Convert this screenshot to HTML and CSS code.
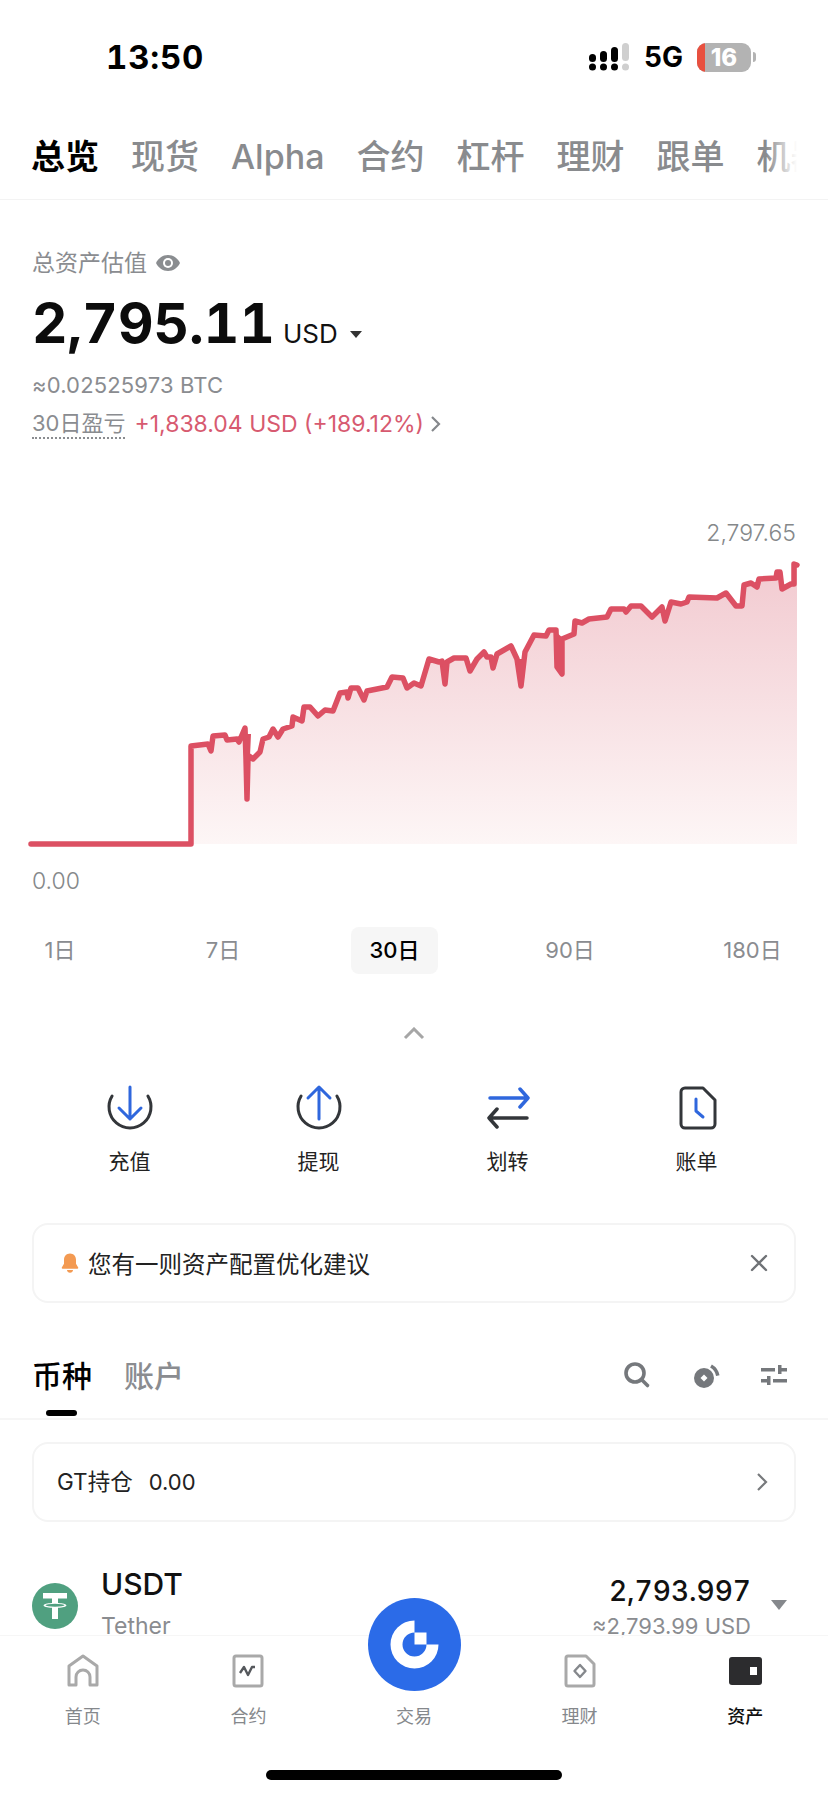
FILE: index.html
```html
<!DOCTYPE html>
<html lang="zh">
<head>
<meta charset="utf-8">
<title>资产总览</title>
<link rel="stylesheet" href="styles.css">
</head>
<body>
<div class="page">
  <header class="status">
    <span class="time">13:50</span>
    <div class="status-right">
      <svg class="signal" width="44" height="30" viewBox="0 0 44 30">
        <g fill="#000"><rect x="2" y="12" width="7" height="8" rx="3.5"/><rect x="13" y="9" width="7" height="11" rx="3.5"/><rect x="24" y="5" width="7" height="15" rx="3.5"/><circle cx="5.5" cy="25" r="3.5"/><circle cx="16.5" cy="25" r="3.5"/><circle cx="27.5" cy="25" r="3.5"/></g>
        <g fill="#cfcfcf"><rect x="35" y="1" width="7" height="18" rx="3.5"/><circle cx="38.5" cy="25" r="3.5"/></g>
      </svg>
      <span class="net">5G</span>
      <div class="battery"><span class="battery-low"></span><span class="battery-num">16</span></div>
      <span class="battery-nub"></span>
    </div>
  </header>

  <nav class="tabs">
    <span class="tab tab-on">总览</span><span class="tab">现货</span><span class="tab">Alpha</span><span class="tab">合约</span><span class="tab">杠杆</span><span class="tab">理财</span><span class="tab">跟单</span><span class="tab">机器人</span>
  </nav>

  <section class="summary">
    <div class="sum-label">总资产估值
      <svg class="eye" width="26" height="18" viewBox="0 0 26 18"><path fill="#8a8d90" d="M13 1C7.500 1 3.300 4.500 1 9c2.300 4.500 6.500 8 12 8s9.700-3.500 12-8c-2.300-4.500-6.500-8-12-8Z"/><circle cx="13" cy="9" r="5" fill="#fff"/><circle cx="13" cy="9" r="3" fill="#8a8d90"/></svg>
    </div>
    <div class="balance"><span class="bal-num">2,795.11</span><span class="bal-unit">USD</span><span class="tri"></span></div>
    <div class="btc">≈0.02525973 BTC</div>
    <div class="pnl"><span class="pnl-label">30日盈亏</span><span class="pnl-val">+1,838.04 USD (+189.12%)</span>
      <svg width="11" height="18" viewBox="0 0 11 18"><path d="M2 2l7 7-7 7" fill="none" stroke="#85888c" stroke-width="2.200"/></svg>
    </div>
  </section>

  <section class="chart">
    <div class="chart-max">2,797.65</div>
    <svg class="chart-svg" width="828" height="310" viewBox="0 550 828 310">
      <defs><linearGradient id="area" x1="0" y1="0" x2="0" y2="1"><stop offset="0" stop-color="#f2cad0"/><stop offset="1" stop-color="#fdf6f6"/></linearGradient></defs>
      <path fill="url(#area)" d="M191 845V747L208 745 211 752 213 737 225 736 227 741 237 740 239 743 245 729 247 800 249 757 253 760 260 753 263 740 269 738 273 730 278 738 283 730 292 727 293 718 302 722 304 708 310 708 318 717 325 711 333 712 340 694 347 693 348 699 351 689 358 689 364 701 367 692 387 688 392 678 403 679 407 689 414 684 421 687 429 660 439 663 442 662 445 685 447 663 454 659 466 659 470 672 477 660 484 653 487 658 491 658 493 669 497 655 511 647 517 660 521 687 525 653 534 636 546 637 549 631 556 631 557 668 562 675 562 640 574 635 575 622 582 624 589 620 607 618 611 610 624 610 626 613 631 607 641 607 652 618 662 608 665 622 671 603 681 605 687 603 689 598 717 599 726 594 736 607 742 607 744 586 751 584 757 588 759 580 776 579 777 573 780 573 782 590 791 585 794 585 794 565 797 566V845Z"/>
      <path fill="none" stroke="#dc5063" stroke-width="5.500" stroke-linecap="round" stroke-linejoin="round" d="M31 845H191V747L208 745 211 752 213 737 225 736 227 741 237 740 239 743 245 729 246 760 247 800 248 760 249 757 253 760 260 753 263 740 269 738 273 730 278 738 283 730 292 727 293 718 302 722 304 708 310 708 318 717 325 711 333 712 340 694 347 693 348 699 351 689 358 689 364 701 367 692 387 688 392 678 403 679 407 689 414 684 421 687 429 660 439 663 442 662 445 685 447 663 454 659 466 659 470 672 477 660 484 653 487 658 491 658 493 669 497 655 511 647 517 660 521 687 525 653 534 636 546 637 549 631 556 631 557 668 562 675 562 640 574 635 575 622 582 624 589 620 607 618 611 610 624 610 626 613 631 607 641 607 652 618 662 608 665 622 671 603 681 605 687 603 689 598 717 599 726 594 736 607 742 607 744 586 751 584 757 588 759 580 776 579 777 573 780 573 782 590 791 585 794 585 794 565 797 566"/>
      <path fill="#dc5063" d="M243 735L251 735 249 780 247 803 245 780ZM518 660L526 660 524 680 521 689 519 680ZM555 632L564 640 564 675 561 677 555 668ZM442 665L448 665 447 680 445 688 443 680Z"/>
    </svg>
    <div class="chart-min">0.00</div>
  </section>

  <div class="periods">
    <span class="period">1日</span><span class="period">7日</span><span class="period period-on">30日</span><span class="period">90日</span><span class="period">180日</span>
  </div>

  <div class="collapse">
    <svg width="22" height="13" viewBox="0 0 22 13"><path d="M2 11l9-9 9 9" fill="none" stroke="#a6a6a6" stroke-width="3"/></svg>
  </div>

  <div class="actions">
    <div class="action">
      <svg width="48" height="48" viewBox="0 0 48 48" fill="none" stroke-width="3" stroke-linecap="round" stroke-linejoin="round"><path stroke="#33363a" d="M6.100 13A21 21 0 1 0 41.900 13"/><path stroke="#2f67dd" d="M24 4V36M13 25L24 36 35 25"/></svg>
      <span>充值</span>
    </div>
    <div class="action">
      <svg width="48" height="48" viewBox="0 0 48 48" fill="none" stroke-width="3" stroke-linecap="round" stroke-linejoin="round"><path stroke="#33363a" d="M6.100 13A21 21 0 1 0 41.900 13"/><path stroke="#2f67dd" d="M24 36V4M13 15L24 4 35 15"/></svg>
      <span>提现</span>
    </div>
    <div class="action">
      <svg width="48" height="48" viewBox="0 0 48 48" fill="none" stroke-width="3.500" stroke-linecap="round" stroke-linejoin="round"><path stroke="#2f67dd" d="M6 15H44M36 6L44 15 36 24"/><path stroke="#33363a" d="M43 35H5M13 26L5 35 13 44"/></svg>
      <span>划转</span>
    </div>
    <div class="action">
      <svg width="48" height="48" viewBox="0 0 48 48" fill="none" stroke-width="3" stroke-linecap="round" stroke-linejoin="round"><path stroke="#33363a" d="M12 5H30L42 17V41a4 4 0 0 1-4 4H12a4 4 0 0 1-4-4V9a4 4 0 0 1 4-4Z"/><path stroke="#2f67dd" d="M23 16V28L30 34"/></svg>
      <span>账单</span>
    </div>
  </div>

  <div class="card notice">
    <svg width="18" height="20" viewBox="0 0 18 20"><path fill="#f39a52" d="M9 0.500c-3.600 0-6 2.800-6 6.300v3.900L0.800 14.600c-.3.600.1 1.200.7 1.200h15c.6 0 1-.6.7-1.200L15 10.700V6.800C15 3.300 12.600.5 9 .5Z"/><path fill="#f39a52" d="M6 17h6c0 1.600-1.300 2.700-3 2.700S6 18.600 6 17Z"/></svg>
    <span class="notice-text">您有一则资产配置优化建议</span>
    <svg class="close" width="18" height="18" viewBox="0 0 18 18"><path d="M2 2l14 14M16 2L2 16" stroke="#6f7276" stroke-width="2.400" stroke-linecap="round"/></svg>
  </div>

  <div class="list-head">
    <div class="list-tab list-tab-on">币种</div>
    <div class="list-tab">账户</div>
    <div class="tools">
      <svg width="28" height="28" viewBox="0 0 28 28" fill="none" stroke="#75787c" stroke-width="3.600"><circle cx="11" cy="11" r="9"/><path d="M17.500 17.500l6 6" stroke-linecap="round"/></svg>
      <svg width="28" height="28" viewBox="0 0 28 28"><circle cx="12" cy="16" r="10" fill="#75787c"/><path fill="#fff" d="M12 12.500l3.500 3.500-3.500 3.500L8.500 16Z"/><path d="M19 3.900A14 14 0 0 1 25.800 13.600" fill="none" stroke="#75787c" stroke-width="3.500"/></svg>
      <svg width="28" height="28" viewBox="0 0 28 28" fill="#75787c"><rect x="1" y="6" width="14" height="3.500"/><rect x="18" y="3" width="3.500" height="9"/><rect x="21" y="6" width="6" height="3.500"/><rect x="1" y="17" width="6" height="3.500"/><rect x="7" y="14" width="3.500" height="9"/><rect x="13" y="17" width="14" height="3.500"/></svg>
    </div>
  </div>

  <div class="card gt">
    <span class="gt-label">GT持仓</span><span class="gt-val">0.00</span>
    <svg class="gt-arrow" width="12" height="20" viewBox="0 0 12 20"><path d="M2 2l8 8-8 8" fill="none" stroke="#77797c" stroke-width="2.200"/></svg>
  </div>

  <div class="coin">
    <svg class="coin-icon" width="46" height="46" viewBox="0 0 46 46"><circle cx="23" cy="23" r="23" fill="#50a080"/><path fill="#fff" d="M11 10H35V15.500H26V20c4.800.3 8.400 1.200 8.400 2.400S30.800 24.500 26 24.800V36H20V24.800c-4.800-.3-8.400-1.200-8.400-2.400S15.200 20.300 20 20V15.500H11Z"/><ellipse cx="23" cy="22.300" rx="9.500" ry="1.500" fill="#50a080"/></svg>
    <div class="coin-name"><div class="coin-sym">USDT</div><div class="coin-full">Tether</div></div>
    <div class="coin-amt"><div class="coin-qty">2,793.997</div><div class="coin-usd">≈2,793.99 USD</div></div>
    <span class="coin-tri"></span>
  </div>

  <footer class="bottom">
    <div class="trade-btn">
      <svg width="93" height="93" viewBox="0 0 93 93"><circle cx="46.500" cy="46.500" r="46.500" fill="#2b6be8"/><path fill="#fff" d="M46.500 22.500A24 24 0 1 0 70.500 46.500H58.500A12 12 0 1 1 46.500 34.500V46.500H58.500V34.500H46.500Z"/></svg>
    </div>
    <div class="nav-item">
      <svg width="34" height="34" viewBox="0 0 34 34" fill="none" stroke="#a9a9a9" stroke-width="3" stroke-linejoin="round"><path d="M3 31V12L17 2 31 12V31H24V23a7 7 0 0 0-14 0V31Z"/></svg>
      <span>首页</span>
    </div>
    <div class="nav-item">
      <svg width="34" height="34" viewBox="0 0 34 34" fill="none" stroke="#a9a9a9" stroke-width="3" stroke-linejoin="round"><path d="M5 2H29a2 2 0 0 1 2 2V30a2 2 0 0 1-2 2H5a2 2 0 0 1-2-2V4a2 2 0 0 1 2-2Z"/><path stroke="#55585c" stroke-width="2.400" d="M9 19l4-6 4 8 4-8h3"/></svg>
      <span>合约</span>
    </div>
    <div class="nav-item nav-gap"><span>交易</span></div>
    <div class="nav-item">
      <svg width="34" height="34" viewBox="0 0 34 34" fill="none" stroke="#a9a9a9" stroke-width="3" stroke-linejoin="round"><path d="M5 2H23L31 10V30a2 2 0 0 1-2 2H5a2 2 0 0 1-2-2V4a2 2 0 0 1 2-2Z"/><path stroke="#85888c" stroke-width="2.400" d="M17 11l5.500 6-5.500 6-5.500-6Z"/></svg>
      <span>理财</span>
    </div>
    <div class="nav-item nav-on">
      <svg width="34" height="34" viewBox="0 0 34 34"><rect x="1" y="3" width="33" height="28" rx="3" fill="#2c2c2e"/><rect x="22" y="13" width="7" height="8" fill="#fff"/></svg>
      <span>资产</span>
    </div>
    <div class="home-bar"></div>
  </footer>
</div>
</body>
</html>
```

FILE: styles.css
```css
* { box-sizing: border-box; }
html, body { margin: 0; padding: 0; background: #fff; }
body { font-family: Inter, "Noto Sans CJK SC", sans-serif; color: #111; }
.page { position: relative; width: 828px; height: 1795px; overflow: hidden; background: #fff; }

.status { height: 114px; display: flex; align-items: center; justify-content: space-between; padding: 0 72px 0 106px; }
.time { font: 700 33px/40px Inter, sans-serif; color: #000; font-feature-settings: "tnum"; letter-spacing: .8px; }
.status-right { display: flex; align-items: center; }
.signal { margin-right: 13px; }
.net { font: 700 28px/30px Inter, sans-serif; color: #000; margin-right: 14px; }
.battery { position: relative; width: 54px; height: 29px; border-radius: 9px; background: #b3b3b3; overflow: hidden; display: flex; align-items: center; justify-content: center; }
.battery-low { position: absolute; left: 0; top: 0; bottom: 0; width: 8px; background: #e8503f; }
.battery-num { font: 800 24px/29px Inter, sans-serif; color: #fff; position: relative; }
.battery-nub { width: 3px; height: 10px; margin-left: 2px; background: #b3b3b3; border-radius: 0 3px 3px 0; }

.tabs { position: relative; height: 86px; padding: 0 0 0 31px; display: flex; align-items: center; gap: 32px; overflow: hidden; border-bottom: 1px solid #f3f3f3; white-space: nowrap; }
.tabs::after { content: ""; position: absolute; right: 0; top: 0; bottom: 0; width: 62px; background: linear-gradient(90deg, rgba(255,255,255,0), #fff 50%); }
.tab { font: 500 34px/44px Inter, "Noto Sans CJK SC", sans-serif; color: #898b8e; flex: none; }
.tab-on { color: #000; font-weight: 700; }

.summary { padding: 48px 0 0 32px; }
.sum-label { display: flex; align-items: center; gap: 8px; height: 30px; font: 400 23px/30px Inter, "Noto Sans CJK SC", sans-serif; color: #8a8c90; }
.balance { display: flex; align-items: baseline; height: 56px; margin-top: 17px; line-height: 56px; }
.bal-num { font: 700 55px/56px Inter, sans-serif; color: #0c0c0c; font-feature-settings: "tnum"; }
.bal-unit { font: 400 26px/56px Inter, sans-serif; margin-left: 8px; color: #111; }
.tri { width: 0; height: 0; margin-left: 12px; border-left: 6px solid transparent; border-right: 6px solid transparent; border-top: 7px solid #333; transform: translateY(-5px); }
.btc { height: 30px; margin-top: 19px; font: 400 22px/30px Inter, sans-serif; color: #8a8c90; letter-spacing: .15px; }
.pnl { display: flex; align-items: center; height: 32px; margin-top: 8px; font: 400 22px/32px Inter, "Noto Sans CJK SC", sans-serif; }
.pnl-label { color: #8a8c90; border-bottom: 2px dotted #8a8c90; line-height: 28px; margin-right: 9px; }
.pnl-val { color: #d75a70; margin-right: 6px; font-size: 23px; }

.chart { margin-top: 78px; }
.chart-max { height: 30px; padding-right: 32px; text-align: right; font: 300 23px/30px Inter, sans-serif; color: #85888a; }
.chart-svg { display: block; margin-top: 1px; }
.chart-min { height: 30px; margin-top: 7px; padding-left: 32px; font: 300 23px/30px Inter, sans-serif; color: #85888a; }

.periods { display: grid; grid-template-columns: 120px 206px 137px 214px 151px; justify-items: center; align-items: center; height: 47px; margin-top: 31px; }
.period { font: 400 22px/47px Inter, "Noto Sans CJK SC", sans-serif; color: #8a8c90; }
.period-on { width: 87px; height: 47px; border-radius: 8px; background: #f6f6f6; color: #000; text-align: center; font-weight: 500; }

.collapse { height: 14px; margin-top: 53px; display: flex; justify-content: center; }

.actions { display: grid; grid-template-columns: repeat(4, 189px); padding-left: 35px; margin-top: 42px; }
.action { display: flex; flex-direction: column; align-items: center; gap: 13px; font: 400 21px/32px "Noto Sans CJK SC", sans-serif; color: #222; }

.card { margin: 0 32px; border: 2px solid #f4f4f4; border-radius: 16px; display: flex; align-items: center; }
.notice { height: 80px; margin-top: 47px; padding: 0 26px 0 27px; }
.notice-text { margin-left: 9px; font: 400 23.5px/32px "Noto Sans CJK SC", sans-serif; color: #222; flex: 1; }

.list-head { display: flex; align-items: center; height: 117px; padding: 0 40px 0 32px; border-bottom: 2px solid #f6f6f6; gap: 32px; }
.list-tab { font: 500 30px/40px "Noto Sans CJK SC", sans-serif; color: #8a8c90; position: relative; top: 13px; }
.list-tab-on { color: #000; }
.list-tab-on::after { content: ""; position: absolute; left: 14px; bottom: -22px; width: 31px; height: 6px; border-radius: 3px; background: #000; }
.tools { margin-left: auto; display: flex; gap: 40px; position: relative; top: 15px; }

.gt { height: 80px; margin-top: 22px; padding: 0 26px 0 23px; }
.gt-label { font: 400 22.5px/30px Inter, "Noto Sans CJK SC", sans-serif; color: #222; }
.gt-val { font: 400 22px/30px Inter, sans-serif; color: #222; margin-left: 16px; }
.gt-arrow { margin-left: auto; }

.coin { display: flex; align-items: flex-start; padding: 42px 41px 0 32px; }
.coin-icon { margin-top: 19px; flex: none; }
.coin-name { margin-left: 23px; }
.coin-sym { font: 500 30px/40px Inter, sans-serif; color: #111; }
.coin-full { font: 400 23px/36px Inter, sans-serif; color: #8a8c90; margin-top: 4px; }
.coin-amt { margin-left: auto; text-align: right; }
.coin-qty { font: 500 28px/36px Inter, sans-serif; color: #111; margin-top: 9px; font-feature-settings: "tnum"; }
.coin-usd { font: 400 22px/34px Inter, sans-serif; color: #8a8c90; }
.coin-tri { flex: none; width: 0; height: 0; margin: 36px 0 0 20px; border-left: 8px solid transparent; border-right: 8px solid transparent; border-top: 10px solid #85888c; }

.bottom { position: absolute; left: 0; right: 0; top: 1635px; height: 160px; background: rgba(255,255,255,.93); border-top: 1px solid #f6f6f6; display: grid; grid-template-columns: repeat(5, 1fr); align-content: start; padding-top: 18px; }
.trade-btn { position: absolute; left: 368px; top: -38px; width: 93px; height: 93px; }
.trade-btn svg { display: block; }
.nav-item { display: flex; flex-direction: column; align-items: center; gap: 14px; font: 400 18px/26px "Noto Sans CJK SC", sans-serif; color: #85888c; }
.nav-gap { padding-top: 48px; }
.nav-on { color: #111; font-weight: 500; }
.home-bar { position: absolute; left: 266px; top: 134px; width: 296px; height: 10px; border-radius: 5px; background: #000; }
```
